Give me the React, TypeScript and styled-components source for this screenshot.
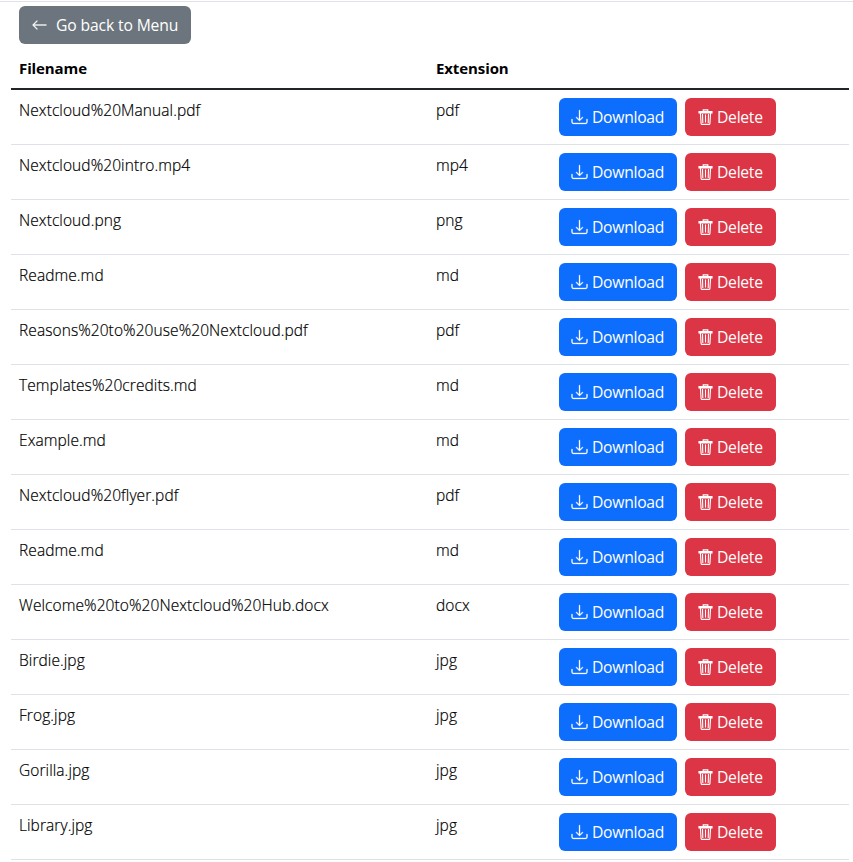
import React from "react";
import styled, { createGlobalStyle } from "styled-components";
import { BsArrowLeft, BsDownload } from "react-icons/bs";

const GlobalStyle = createGlobalStyle`
  *, *::before, *::after { box-sizing: border-box; }
  body {
    margin: 0;
    background: #fff;
    color: #000;
    font-family: "Open Sans", "Noto Sans", sans-serif;
    font-size: 15.5px;
    line-height: 24px;
    overflow: hidden;
  }
`;

const Page = styled.main`
  margin-top: 1px;
  border-top: 1px solid #dee2e6;
  padding: 4px 4px 0 11px;
`;

const Toolbar = styled.div`
  padding-left: 8px;
  height: 42px;
`;

const tones = { secondary: "#6c757d", primary: "#0d6efd", danger: "#dc3545" };

const Button = styled.button<{ $tone: keyof typeof tones; $width: number; $gap: number }>`
  display: inline-flex;
  align-items: center;
  flex: none;
  gap: ${(p) => p.$gap}px;
  width: ${(p) => p.$width}px;
  height: 38px;
  padding: 0 12px;
  border: 0;
  border-radius: 6px;
  background: ${(p) => tones[p.$tone]};
  color: #fff;
  font: inherit;
  font-size: 15.7px;
  font-weight: 400;
  letter-spacing: ${(p) => (p.$tone === "secondary" ? -0.14 : -0.28)}px;
  white-space: nowrap;
  cursor: pointer;

  svg {
    flex: none;
    width: 17px;
    height: 16px;
    stroke: currentColor;
    stroke-width: 0.3px;
  }
`;

const Table = styled.table`
  width: 100%;
  table-layout: fixed;
  border-collapse: separate;
  border-spacing: 0;
`;

const HeadCell = styled.th<{ $width?: number }>`
  width: ${(p) => (p.$width ? `${p.$width}px` : "auto")};
  height: 42px;
  padding: 0 8px 1px;
  border-bottom: 2px solid #212529;
  color: #000;
  font-size: 15px;
  font-weight: 700;
  letter-spacing: -0.1px;
  text-align: left;
`;

const Cell = styled.td`
  height: 55px;
  padding: 8px;
  border-bottom: 1px solid #dee2e6;
  vertical-align: top;
`;

const TextCell = styled(Cell)`
  font-weight: 300;
  letter-spacing: 0.08px;
  -webkit-text-stroke: 0.2px #000;
`;

const Actions = styled.div`
  display: flex;
  gap: 8px;
`;

const TrashIcon = () => (
  <svg viewBox="0 0 17 16" fill="none" aria-hidden="true">
    <g stroke="currentColor" strokeWidth="1.15">
      <path d="M2 2.6h13v1.3H2zM6.2 2.5V.9h4.6v1.6" />
      <path d="M3.4 4l.7 10.6q.1.8.9.8h7q.8 0 .9-.8L13.6 4" />
      <path d="M5.5 5l.3 9M8.5 5.5v8M11.5 5l-.3 9" />
    </g>
  </svg>
);

const files: [string, string][] = [
  ["Nextcloud%20Manual", "pdf"],
  ["Nextcloud%20intro", "mp4"],
  ["Nextcloud", "png"],
  ["Readme", "md"],
  ["Reasons%20to%20use%20Nextcloud", "pdf"],
  ["Templates%20credits", "md"],
  ["Example", "md"],
  ["Nextcloud%20flyer", "pdf"],
  ["Readme", "md"],
  ["Welcome%20to%20Nextcloud%20Hub", "docx"],
  ["Birdie", "jpg"],
  ["Frog", "jpg"],
  ["Gorilla", "jpg"],
  ["Library", "jpg"],
];

export default function App() {
  return (
    <>
      <GlobalStyle />
      <Page>
        <Toolbar>
          <Button $tone="secondary" $width={172} $gap={8}>
            <BsArrowLeft />
            <span>Go back to Menu</span>
          </Button>
        </Toolbar>
        <Table>
          <thead>
            <tr>
              <HeadCell $width={417}>Filename</HeadCell>
              <HeadCell $width={123}>Extension</HeadCell>
              <HeadCell />
            </tr>
          </thead>
          <tbody>
            {files.map(([name, extension], index) => (
              <tr key={index}>
                <TextCell>{`${name}.${extension}`}</TextCell>
                <TextCell>{extension}</TextCell>
                <Cell>
                  <Actions>
                    <Button $tone="primary" $width={118} $gap={4}>
                      <BsDownload />
                      <span>Download</span>
                    </Button>
                    <Button $tone="danger" $width={91} $gap={3}>
                      <TrashIcon />
                      <span>Delete</span>
                    </Button>
                  </Actions>
                </Cell>
              </tr>
            ))}
          </tbody>
        </Table>
      </Page>
    </>
  );
}
